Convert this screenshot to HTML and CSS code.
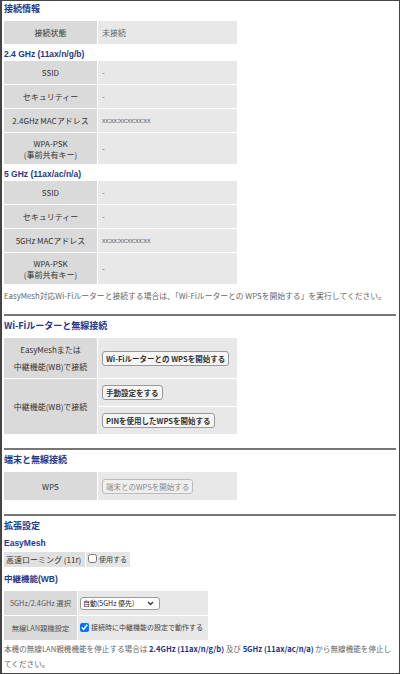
FILE: index.html
```html
<!DOCTYPE html>
<html lang="ja">
<head>
<meta charset="utf-8">
<link rel="stylesheet" href="styles.css">
</head>
<body>
<div class="frame">

<!-- 接続情報 -->
<h2 class="secTitle">接続情報</h2>
<table class="infoTable">
  <tr><th>接続状態</th><td>未接続</td></tr>
</table>

<h3 class="subTitle">2.4 GHz (11ax/n/g/b)</h3>
<table class="infoTable">
  <tr><th>SSID</th><td>-</td></tr>
  <tr><th>セキュリティー</th><td>-</td></tr>
  <tr><th>2.4GHz MACアドレス</th><td class="mac">xx:xx:xx:xx:xx:xx</td></tr>
  <tr class="tall"><th>WPA-PSK<br>(事前共有キー)</th><td>-</td></tr>
</table>

<h3 class="subTitle">5 GHz (11ax/ac/n/a)</h3>
<table class="infoTable">
  <tr><th>SSID</th><td>-</td></tr>
  <tr><th>セキュリティー</th><td>-</td></tr>
  <tr><th>5GHz MACアドレス</th><td class="mac">xx:xx:xx:xx:xx:xx</td></tr>
  <tr class="tall"><th>WPA-PSK<br>(事前共有キー)</th><td>-</td></tr>
</table>

<p class="note">EasyMesh対応Wi-Fiルーターと接続する場合は、「Wi-Fiルーターとの WPSを開始する」を実行してください。</p>

<hr class="divider">

<!-- Wi-Fiルーターと無線接続 -->
<h2 class="secTitle">Wi-Fiルーターと無線接続</h2>
<table class="infoTable btnTable">
  <tr class="meshRow">
    <th>EasyMeshまたは<br>中継機能(WB)で接続</th>
    <td><button class="btn">Wi-Fiルーターとの WPSを開始する</button></td>
  </tr>
  <tr class="subRow">
    <th rowspan="2">中継機能(WB)で接続</th>
    <td><button class="btn">手動設定をする</button></td>
  </tr>
  <tr class="subRow">
    <td><button class="btn">PINを使用したWPSを開始する</button></td>
  </tr>
</table>

<hr class="divider">

<!-- 端末と無線接続 -->
<h2 class="secTitle">端末と無線接続</h2>
<table class="infoTable wpsTable">
  <tr class="wpsRow"><th>WPS</th><td><button class="btn" disabled>端末とのWPSを開始する</button></td></tr>
</table>

<hr class="divider">

<!-- 拡張設定 -->
<h2 class="secTitle">拡張設定</h2>
<h3 class="subTitle meshTitle">EasyMesh</h3>
<table class="smallTable">
  <tr>
    <th class="roamLabel">高速ローミング (11r)</th>
    <td class="roamValue"><label class="chk"><input type="checkbox">使用する</label></td>
  </tr>
</table>

<h3 class="subTitle wbTitle">中継機能(WB)</h3>
<table class="wbTable">
  <tr>
    <th>5GHz/2.4GHz 選択</th>
    <td>
      <span class="selWrap">
        <select class="sel">
          <option>自動(5GHz 優先)</option>
        </select>
        <svg class="selArrow" width="7" height="5" viewBox="0 0 7 5"><path d="M1 1 L3.5 3.5 L6 1" fill="none" stroke="#333" stroke-width="1.3"/></svg>
      </span>
    </td>
  </tr>
  <tr>
    <th>無線LAN親機設定</th>
    <td><label class="chk"><input type="checkbox" checked>接続時に中継機能の設定で動作する</label></td>
  </tr>
</table>

<p class="note last">本機の無線LAN親機機能を停止する場合は <b>2.4GHz (11ax/n/g/b)</b> 及び <b>5GHz (11ax/ac/n/a)</b> から無線機能を停止してください。</p>

</div>
</body>
</html>
```

FILE: styles.css
```css
html, body {
  margin: 0;
  padding: 0;
  background: #fff;
}

body {
  font-family: "Noto Sans CJK JP", "Noto Sans", sans-serif;
  font-size: 8px;
  color: #333;
}

.frame {
  box-sizing: border-box;
  width: 400px;
  height: 674px;
  border: 1px solid #444;
  border-left: 2px solid #444;
  padding: 1px 3px 0 1px;
  overflow: hidden;
}

/* headings */
.secTitle {
  margin: 0;
  padding-left: 1px;
  font-size: 9px;
  line-height: 14px;
  font-weight: bold;
  color: #23398c;
  white-space: nowrap;
}

.subTitle {
  margin: 0;
  padding-left: 1px;
  font-size: 8.5px;
  line-height: 12px;
  font-weight: bold;
  color: #23398c;
  font-family: "Liberation Sans", "Noto Sans CJK JP", sans-serif;
}

.secTitle + .infoTable {
  margin-top: 4px;
}

.meshTitle {
  margin-top: 4px;
}

.wbTitle {
  margin-top: 5px;
}

/* tables */
.infoTable {
  width: 235px;
  border-collapse: separate;
  border-spacing: 1px;
  margin-bottom: 3px;
}

.infoTable th,
.infoTable td {
  height: 23px;
  padding: 0 4px;
  line-height: 11px;
  white-space: nowrap;
}

.infoTable th {
  width: 85px;
  background-color: #dadada;
  font-weight: normal;
  color: #333;
  text-align: center;
}

.infoTable td {
  background-color: #e8e8e8;
  color: #666;
  text-align: left;
}

.infoTable tr.tall th,
.infoTable tr.tall td {
  height: 31px;
}

.mac {
  font-size: 7px;
  letter-spacing: -0.2px;
}

.btnTable {
  margin-bottom: 5px;
}

.wpsTable {
  margin-bottom: 6px;
}

.btnTable tr.meshRow th,
.btnTable tr.meshRow td {
  height: 40px;
}

.btnTable tr.meshRow th {
  line-height: 17px;
}

.btnTable tr.subRow td {
  height: 27px;
}

.infoTable tr.wpsRow th,
.infoTable tr.wpsRow td {
  height: 28px;
}

.btn {
  font-family: "Noto Sans CJK JP", sans-serif;
  font-size: 7.5px;
  font-weight: bold;
  color: #333;
  background-color: #f6f6f6;
  border: 1px solid #999;
  border-radius: 3px;
  padding: 0 3px;
  height: 15px;
  line-height: 13px;
  white-space: nowrap;
}

.btn:disabled {
  font-weight: normal;
  color: #888;
  background-color: #efefef;
  border-color: #bbb;
}

/* notes */
.note {
  margin: 4px 0 1px 1px;
  font-size: 7.8px;
  line-height: 14px;
  color: #666;
  white-space: nowrap;
}

.note b {
  color: #1f2f86;
}

.note.last {
  margin: 0 0 0 1px;
  font-size: 7.6px;
  line-height: 15px;
  white-space: normal;
  width: 388px;
}

.divider {
  margin: 11px 0 3px 1px;
  border: none;
  border-top: 2px solid #777;
}

.btnTable + .divider,
.wpsTable + .divider {
  margin-top: 13px;
}

/* extended settings */
.smallTable,
.wbTable {
  border-collapse: separate;
  border-spacing: 1px;
}

.smallTable {
  margin-top: 2px;
}

.smallTable th,
.smallTable td {
  height: 15px;
  padding: 0 2px;
  font-weight: normal;
  white-space: nowrap;
}

.roamLabel {
  width: 77px;
  text-align: left;
  font-size: 8px;
  color: #333;
  background-color: #e0e0e0;
}

.roamValue {
  width: 40px;
  background-color: #e6e6e6;
}

.chk {
  display: inline-flex;
  align-items: center;
  font-size: 7px;
  color: #444;
  white-space: nowrap;
}

.chk input {
  margin: 0 2px 0 0;
  width: 9px;
  height: 9px;
}

.wbTable {
  margin-top: 5px;
}

.wbTable th,
.wbTable td {
  height: 24px;
  padding: 0 2px;
  font-weight: normal;
  white-space: nowrap;
}

.wbTable th {
  width: 69px;
  font-size: 7.3px;
  background-color: #dadada;
  color: #555;
  text-align: center;
}

.wbTable td {
  width: 126px;
  background-color: #e8e8e8;
}

.selWrap {
  position: relative;
  display: inline-block;
  vertical-align: middle;
}

.sel {
  appearance: none;
  -webkit-appearance: none;
  font-family: "Noto Sans CJK JP", sans-serif;
  font-size: 7px;
  width: 80px;
  height: 13px;
  padding: 0 2px;
  border: 1px solid #999;
  border-radius: 3px;
  background-color: #fff;
  color: #222;
  display: block;
}

.selArrow {
  position: absolute;
  right: 6px;
  top: 4px;
}
```
